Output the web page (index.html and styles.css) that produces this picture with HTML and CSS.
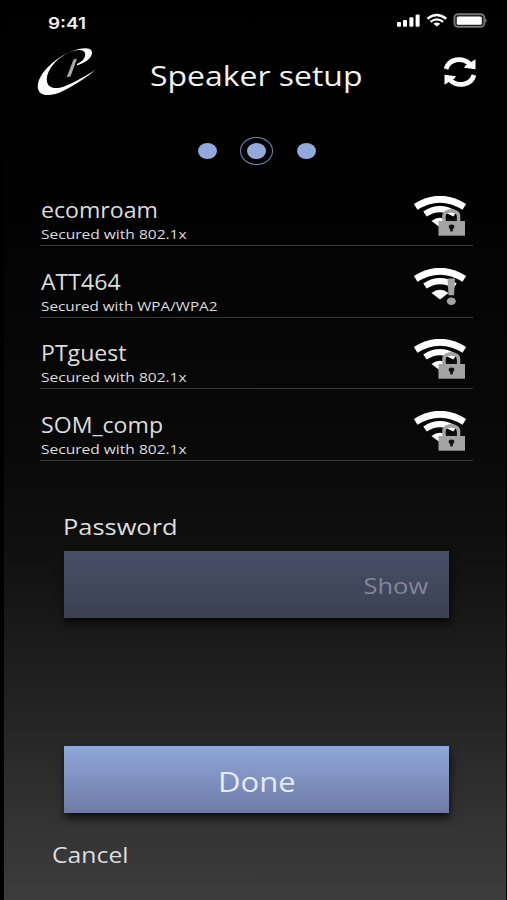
FILE: index.html
```html
<!DOCTYPE html>
<html lang="en">
<head>
  <meta charset="UTF-8">
  <meta name="viewport" content="width=device-width, initial-scale=1.0">
  <title>Speaker setup</title>
  <link rel="stylesheet" href="styles.css">
</head>
<body>

  <!-- shared icons -->
  <svg class="sprite" width="0" height="0">
    <symbol id="wifi" viewBox="0 0 54 42">
      <path d="M2.7 10.8 Q27 -4.4 51.3 10.8" fill="none" stroke="#fff" stroke-width="6.8"/>
      <path d="M12 18 Q27 8.4 42 18" fill="none" stroke="#fff" stroke-width="6.2"/>
      <path d="M18.5 25 Q27 18.5 35.5 25 L27 31.5z" fill="#fff"/>
    </symbol>
    <symbol id="lock" viewBox="0 0 54 42">
      <path d="M31 26 V20 C31 13.2 45.5 13.2 45.5 20 V26" fill="none" stroke="#a3a3a3" stroke-width="3.6"/>
      <path d="M32.8 20.5 L38.4 23.5 L43.7 20.5 V25 H32.8z" fill="#111"/>
      <path d="M25.5 25 H52 V39.7 H25.5z" fill="#a3a3a3"/>
      <ellipse cx="38.5" cy="30.7" rx="2.8" ry="2.3" fill="#111"/>
      <path d="M37.2 31 H39.8 V35.4 H37.2z" fill="#111"/>
    </symbol>
    <symbol id="alert" viewBox="0 0 54 42">
      <path d="M34.5 10.4 H42 L41 27.2 H35.5z" fill="#a3a3a3"/>
      <ellipse cx="38.3" cy="33.3" rx="4.5" ry="3.8" fill="#a3a3a3"/>
    </symbol>
  </svg>

  <div class="screen">
    <div class="status-bar">
      <p class="time wide">9:41</p>
      <svg class="status-icons" width="91" height="16" viewBox="0 0 91 16">
        <g fill="#fff">
          <rect x="0" y="9" width="4" height="4.8" rx="1"/>
          <rect x="6" y="7" width="4" height="6.8" rx="1"/>
          <rect x="12.4" y="4.3" width="4" height="9.5" rx="1"/>
          <rect x="18.6" y="1.4" width="4" height="12.4" rx="1"/>
          <path d="M36.3 10.8 Q39.8 8.4 43.3 10.8 L39.8 13.6z"/>
        </g>
        <path d="M30.5 5.8 Q39.8 -1.8 49.3 5.8" fill="none" stroke="#fff" stroke-width="2.4"/>
        <path d="M33.5 8.9 Q39.8 4 46.1 8.9" fill="none" stroke="#fff" stroke-width="2.2"/>
        <rect x="57.4" y="1.2" width="30" height="12.6" rx="3.6" fill="#222" stroke="#777" stroke-width="1.8"/>
        <rect x="59.8" y="3.4" width="25" height="8.4" rx="1.6" fill="#fff"/>
        <path d="M88.4 5.4 Q91 7.5 88.4 9.6z" fill="#999"/>
      </svg>
    </div>

    <div class="header">
      <svg class="logo" width="60" height="52" viewBox="0 0 60 52">
        <path d="M40 19.5 C50 16.5 57 10 54.5 4.5 C51 -1 33 3.5 19 14 C5 24.5 -1 36 1.2 43.5 C3.5 51 15 50.5 27 44.5 C40 38 52 29.5 59 23.5 C50 29 38 36.5 27 40.5 C17 44 9.5 41.5 9.8 33 C10.2 24 18 14.5 28 8.5 C38 3 46.5 2.5 48 7 C49 11 46 15.5 40 18z" fill="#fff"/>
        <path d="M36.5 13.5 L40 12.8 L33.5 30.5 L29.8 31z" fill="#aaa"/>
      </svg>
      <h1 class="wide">Speaker setup</h1>
      <svg class="refresh" width="34" height="30" viewBox="0 0 34 30">
        <path d="M3 12 C6 1.5 19 0 26.5 6.5" fill="none" stroke="#fff" stroke-width="4.8"/>
        <path d="M32.5 2.3 V12.3 L21 10.8 L22.5 8.5z" fill="#fff"/>
        <path d="M31 18 C28 28.500 15 30 7.500 23.500" fill="none" stroke="#fff" stroke-width="4.8"/>
        <path d="M1.500 27.700 V17.700 L13 19.200 L11.500 21.500z" fill="#fff"/>
      </svg>
    </div>

    <div class="steps">
      <span class="dot"></span>
      <span class="ring"><span class="dot"></span></span>
      <span class="dot"></span>
    </div>

    <div class="networks">
      <div class="network">
        <div class="info">
          <p class="name wide">ecomroam</p>
          <p class="security wide">Secured with 802.1x</p>
        </div>
        <svg class="signal" width="54" height="42"><use href="#wifi"/><use href="#lock"/></svg>
      </div>
      <div class="network">
        <div class="info">
          <p class="name wide">ATT464</p>
          <p class="security wpa wide">Secured with WPA/WPA2</p>
        </div>
        <svg class="signal" width="54" height="42"><use href="#wifi"/><use href="#alert"/></svg>
      </div>
      <div class="network">
        <div class="info">
          <p class="name wide">PTguest</p>
          <p class="security wide">Secured with 802.1x</p>
        </div>
        <svg class="signal" width="54" height="42"><use href="#wifi"/><use href="#lock"/></svg>
      </div>
      <div class="network">
        <div class="info">
          <p class="name wide">SOM_comp</p>
          <p class="security wide">Secured with 802.1x</p>
        </div>
        <svg class="signal" width="54" height="42"><use href="#wifi"/><use href="#lock"/></svg>
      </div>
    </div>

    <div class="form">
      <p class="label wide">Password</p>
      <div class="field"><span class="show wide">Show</span></div>
      <div class="done"><span class="wide">Done</span></div>
    </div>
    <p class="cancel wide">Cancel</p>
  </div>

</body>
</html>
```

FILE: styles.css
```css
*{
  margin: 0;
  padding: 0;
  box-sizing: border-box;
}
body{
  font-family: "Open Sans", sans-serif;
  background-color: #000;
  color: #ddd;
}
.sprite{
  display: block;
}
.screen{
  display: flex;
  flex-direction: column;
  height: 900px;
  margin: 0 1px 0 4px;
  background: linear-gradient(#000 0, #020202 200px, #090909 450px, #101010 550px, #1b1b1b 640px, #262626 730px, #333 820px, #3c3c3c 900px);
  overflow: hidden;
}

/* extended letterforms */
.wide{
  transform: scaleX(1.18);
  transform-origin: left;
  white-space: nowrap;
}

.status-bar{
  display: flex;
  justify-content: space-between;
  height: 44px;
  padding: 13px 18px 0 44px;
}
.time{
  font-family: Inter, sans-serif;
  font-size: 16px;
  font-weight: 600;
  line-height: 20px;
  color: #eee;
}

.header{
  display: flex;
  height: 64px;
  padding: 2px 29px 0 33px;
}
h1{
  font-size: 26.5px;
  font-weight: 400;
  line-height: 36px;
  margin: 12px 0 0 52.5px;
  color: #f2f2f2;
}
h1.wide{
  transform: scaleX(1.205);
}
.refresh{
  margin: 11px 0 0 auto;
}

.steps{
  display: flex;
  justify-content: center;
  align-items: center;
  gap: 23.5px;
  height: 28px;
  margin-top: 29px;
  padding-left: 3px;
}
.dot{
  width: 19px;
  height: 16px;
  border-radius: 50%;
  background-color: #93a8dc;
}
.ring{
  display: grid;
  place-content: center;
  width: 33px;
  height: 28px;
  border: 1.5px solid #7c88b4;
  border-radius: 50%;
}

.networks{
  margin: 9.5px 33px 0 36px;
}
.network{
  display: flex;
  justify-content: space-between;
  height: 71.6px;
  border-bottom: 1.5px solid #383838;
  padding: 21.5px 6.5px 0 1px;
}
.name{
  font-size: 21px;
  line-height: 28px;
  transform: scaleX(1.1);
}
.security{
  font-size: 13px;
  line-height: 20px;
  transform: scaleX(1.195);
}
.security.wpa{
  transform: scaleX(1.175);
}

.form{
  margin: 50px 57px 0 60px;
}
.label{
  font-size: 22.5px;
  line-height: 32px;
  margin-left: -1.5px;
  transform: scaleX(1.13);
}
.field, .done{
  display: flex;
  align-items: center;
  height: 67px;
  box-shadow: 1px 5px 8px rgba(0,0,0,.7);
}
.field{
  justify-content: flex-end;
  margin-top: 8px;
  padding-right: 21px;
  background: linear-gradient(#465067, #3c4153);
}
.show{
  transform: scaleX(1.13);
  transform-origin: right;
  font-size: 22.5px;
  padding-top: 2px;
  color: #80879a;
}
.done{
  justify-content: center;
  margin-top: 128px;
  padding-top: 4px;
  background: linear-gradient(#90a7da, #6d7ba4);
  color: #e4ebfa;
  font-size: 27px;
}
.done span{
  transform: scaleX(1.15);
  transform-origin: center;
}
.cancel{
  margin: 26px 0 0 48px;
  font-size: 22.5px;
  line-height: 32px;
  transform: scaleX(1.1);
}
```
